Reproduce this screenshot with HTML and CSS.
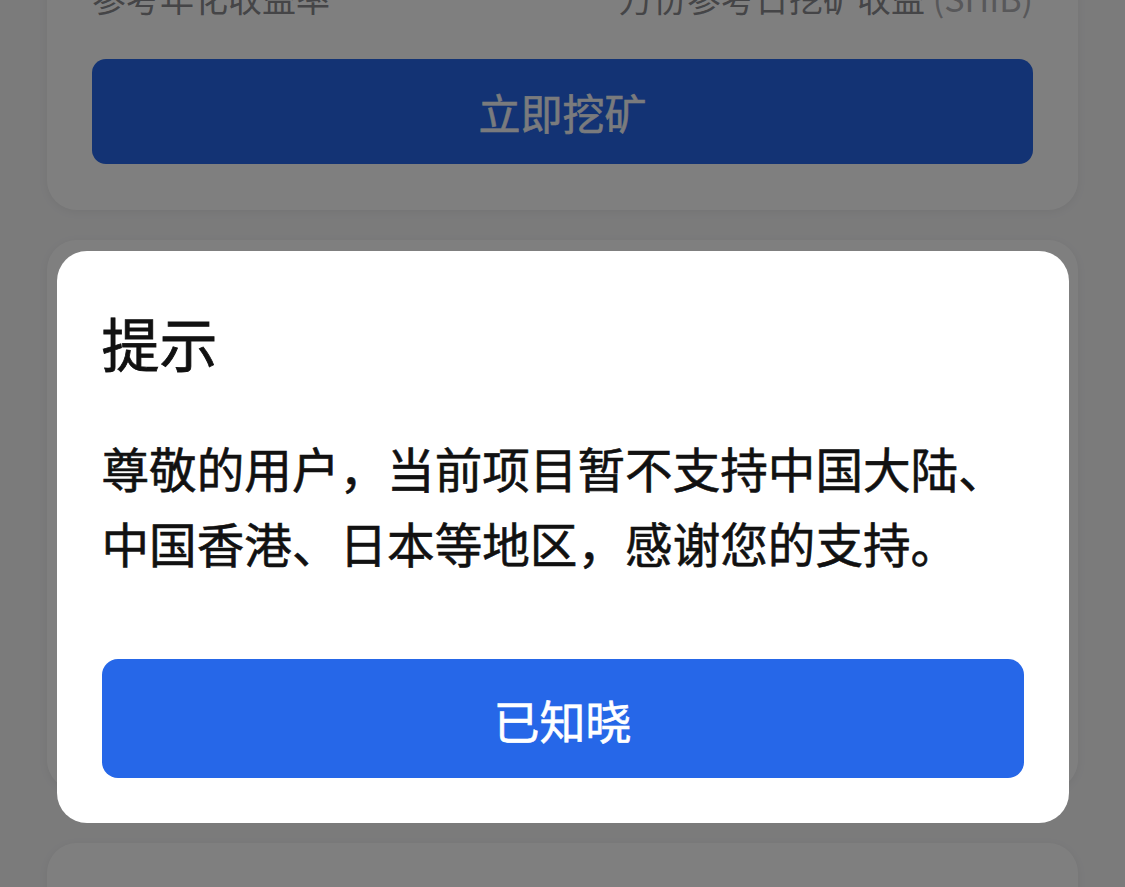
FILE: index.html
```html
<!DOCTYPE html>
<html lang="zh-CN">
<head>
    <meta charset="UTF-8">
    <meta name="viewport" content="width=device-width, initial-scale=1.0">
    <title>挖矿</title>
    <link rel="stylesheet" href="styles.css">
</head>
<body>
    <div class="page">
        <div class="card mining-card">
            <div class="stat-labels">
                <span>参考年化收益率</span>
                <span>万份参考日挖矿收益 <em>(SHIB)</em></span>
            </div>
            <button class="btn btn-primary">立即挖矿</button>
        </div>
        <div class="card card-middle"></div>
        <div class="card card-bottom"></div>
    </div>

    <!-- Region notice dialog -->
    <div class="mask">
        <div class="dialog">
            <h2 class="dialog-title">提示</h2>
            <p class="dialog-text">尊敬的用户，当前项目暂不支持中国大陆、中国香港、日本等地区，感谢您的支持。</p>
            <button class="btn btn-primary dialog-btn">已知晓</button>
        </div>
    </div>
</body>
</html>
```

FILE: styles.css
```css
body {
    margin: 0;
    height: 887px;
    overflow: hidden;
    background-color: #f6f6f7;
    font-family: "Noto Sans CJK SC", "Noto Sans", sans-serif;
}

.page {
    padding: 0 47px;
}

.card {
    background-color: #fff;
    border-radius: 30px;
    box-shadow: 0 2px 10px rgba(0, 0, 0, 0.06);
}

.mining-card {
    margin-top: -80px;
    padding: 58px 45px 46px;
}

.stat-labels {
    display: flex;
    justify-content: space-between;
    font-size: 34px;
    line-height: 40px;
    color: #8a8a8e;
    margin-bottom: 41px;
}

.stat-labels em {
    font-style: normal;
    color: #b0b0b4;
}

.btn {
    display: block;
    width: 100%;
    border: none;
    font-family: inherit;
    cursor: pointer;
    -webkit-text-stroke: 0.6px currentColor;
}

.btn-primary {
    background-color: #2667e8;
    color: #fff;
}

.mining-card .btn {
    height: 105px;
    border-radius: 14px;
    font-size: 42px;
    color: #f4f6fb;
}

.card-middle {
    margin-top: 30px;
    height: 550px;
}

.card-bottom {
    margin-top: 53px;
    height: 200px;
}

.mask {
    position: fixed;
    top: 0;
    left: 0;
    right: 0;
    bottom: 0;
    background-color: rgba(0, 0, 0, 0.5);
    display: flex;
    justify-content: center;
    align-items: flex-start;
    padding-top: 251px;
}

.dialog {
    width: 1012px;
    box-sizing: border-box;
    padding: 55px 45px 45px;
    background-color: #fff;
    border-radius: 30px;
    color: #111;
}

.dialog-title {
    margin: 0;
    font-size: 58px;
    line-height: 72px;
    font-weight: 400;
    -webkit-text-stroke: 0.8px currentColor;
}

.dialog-text {
    margin: 52px 0 0;
    font-size: 47.6px;
    line-height: 75px;
    font-weight: 400;
    -webkit-text-stroke: 0.6px currentColor;
}

.dialog-btn {
    margin-top: 79px;
    height: 119px;
    border-radius: 16px;
    font-size: 46px;
}
```
